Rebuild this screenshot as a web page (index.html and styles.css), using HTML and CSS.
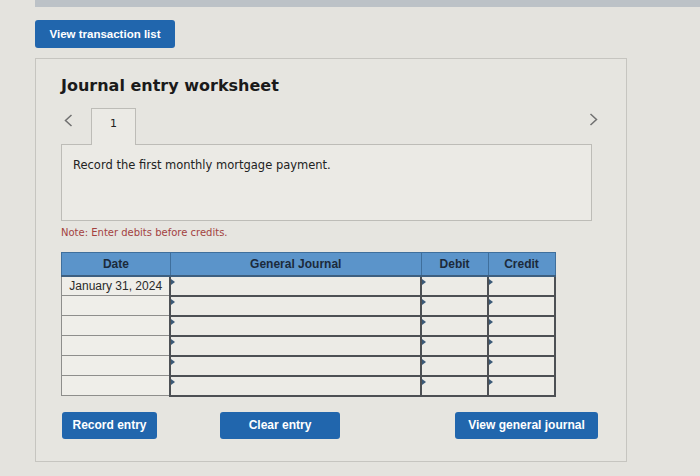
FILE: index.html
```html
<!DOCTYPE html>
<html lang="en">

    <head>
        <meta charset="UTF-8">
        <meta name="viewport" content="width=device-width, initial-scale=1.0">
        <title>Journal entry worksheet</title>
        <link rel="stylesheet" href="styles.css">
    </head>

    <body>
        <div class="topbar"></div>
        <button class="btn btn-list">View transaction list</button>

        <div class="worksheet">
            <h2 class="title">Journal entry worksheet</h2>

            <div class="tabs">
                <svg class="arrow" width="9" height="13" viewBox="0 0 9 13">
                    <polyline points="7.5,1 1.5,6.5 7.5,12" fill="none" stroke="#707070" stroke-width="1.5"/>
                </svg>
                <div class="tab">1</div>
                <svg class="arrow arrow-next" width="9" height="13" viewBox="0 0 9 13">
                    <polyline points="1.5,1 7.5,6.5 1.5,12" fill="none" stroke="#707070" stroke-width="1.5"/>
                </svg>
            </div>
            <div class="question">Record the first monthly mortgage payment.</div>

            <p class="note">Note: Enter debits before credits.</p>

            <table class="journal">
                <thead>
                    <tr>
                        <th class="c-date">Date</th>
                        <th class="c-acct">General Journal</th>
                        <th class="c-num">Debit</th>
                        <th class="c-num">Credit</th>
                    </tr>
                </thead>
                <tbody>
                    <tr>
                        <td class="date">January 31, 2024</td>
                        <td class="in"></td>
                        <td class="in"></td>
                        <td class="in"></td>
                    </tr>
                    <tr><td class="date"></td><td class="in"></td><td class="in"></td><td class="in"></td></tr>
                    <tr><td class="date"></td><td class="in"></td><td class="in"></td><td class="in"></td></tr>
                    <tr><td class="date"></td><td class="in"></td><td class="in"></td><td class="in"></td></tr>
                    <tr><td class="date"></td><td class="in"></td><td class="in"></td><td class="in"></td></tr>
                    <tr><td class="date"></td><td class="in"></td><td class="in"></td><td class="in"></td></tr>
                </tbody>
            </table>

            <div class="actions">
                <button class="btn btn-record">Record entry</button>
                <button class="btn btn-clear">Clear entry</button>
                <button class="btn btn-journal">View general journal</button>
            </div>
        </div>
    </body>

</html>
```

FILE: styles.css
```css
* {
    margin: 0;
    padding: 0;
    box-sizing: border-box;
}

body {
    background: #e4e3de;
    font-family: "DejaVu Sans", Verdana, sans-serif;
    color: #222;
}

.topbar {
    margin-left: 35px;
    height: 7px;
    background: #bcc2c7;
}

.btn {
    display: block;
    border: none;
    border-radius: 3px;
    background: #2166ad;
    color: #fff;
    font-family: "Liberation Sans", Arial, sans-serif;
    font-weight: bold;
    font-size: 12px;
}

.btn-list {
    margin: 13px 0 0 35px;
    width: 140px;
    height: 28px;
    font-size: 11.5px;
}

.worksheet {
    margin: 10px 0 0 35px;
    width: 592px;
    height: 404px;
    border: 1px solid #c6c5c0;
    background: #e6e5e0;
    padding: 17px 0 0 25px;
}

.title {
    font-size: 16px;
    line-height: 20px;
    font-weight: bold;
    color: #1a1a1a;
}

.tabs {
    display: flex;
    align-items: center;
    width: 537px;
    height: 37px;
    margin-top: 11px;
}

.arrow {
    margin: -10px 18px 0 3px;
}

.arrow-next {
    margin: -12px 0 0 auto;
}

.tab {
    align-self: stretch;
    width: 45px;
    border: 1px solid #bdbcb7;
    border-bottom: none;
    background: #ebeae5;
    text-align: center;
    font-size: 11px;
    line-height: 30px;
    position: relative;
    top: 1px;
}

.question {
    width: 531px;
    height: 77px;
    border: 1px solid #bdbcb7;
    background: #ebeae5;
    padding: 13px 0 0 11px;
    font-size: 11.5px;
}

.note {
    margin-top: 6px;
    font-size: 10px;
    color: #a3423f;
}

.journal {
    margin-top: 14px;
    border-collapse: collapse;
    width: 495px;
    font-family: "Liberation Sans", Arial, sans-serif;
}

.journal th {
    height: 23px;
    background: #5b94ca;
    color: #1b2a3b;
    font-size: 12px;
    border: 1px solid #3f6f9c;
    border-bottom: 2px solid #3d5f80;
}

.c-date {
    width: 109px;
}

.c-acct {
    width: 251px;
}

.c-num {
    width: 67px;
}

.journal td {
    height: 20px;
    background: #ecebe6;
}

.journal .date {
    border: 1px solid #8e8e8c;
    text-align: center;
    font-size: 12px;
    color: #2a2a2a;
    background: #efeee9;
}

.journal .in {
    border: 2px solid #4d5054;
    position: relative;
}

/* small marker in the corner of every input cell */
.journal .in::before {
    content: "";
    position: absolute;
    left: 0;
    top: 2px;
    border-left: 4px solid #3c5a78;
    border-top: 3px solid transparent;
    border-bottom: 3px solid transparent;
}

.actions {
    display: flex;
    margin-top: 15px;
    padding-left: 1px;
}

.actions .btn {
    height: 27px;
}

.btn-record {
    width: 95px;
}

.btn-clear {
    width: 120px;
    margin-left: 63px;
}

.btn-journal {
    width: 143px;
    margin-left: 115px;
}
```
